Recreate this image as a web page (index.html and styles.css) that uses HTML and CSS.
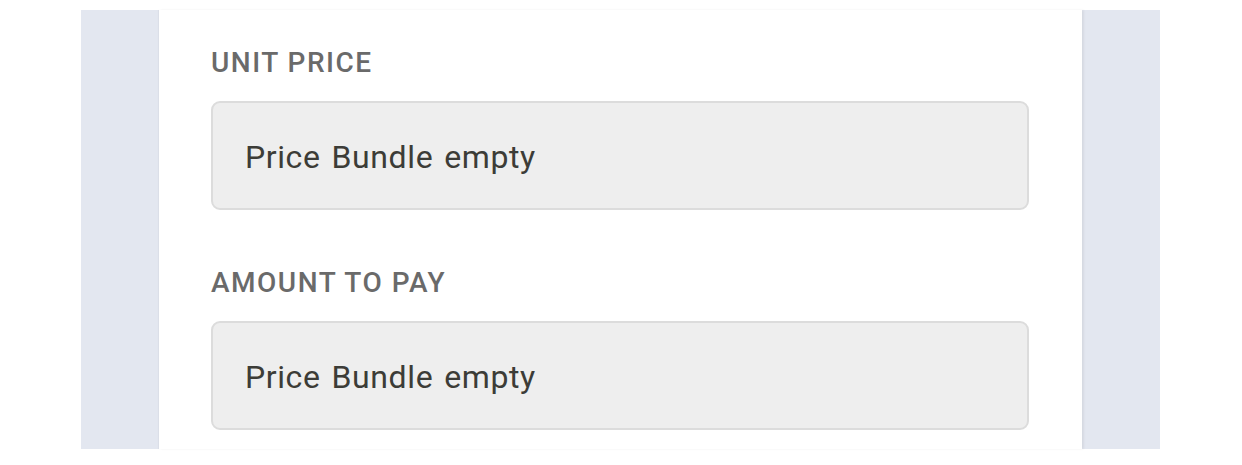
FILE: index.html
```html
<!DOCTYPE html>
<html>
<head>
<meta charset="utf-8">
<link rel="stylesheet" href="styles.css">
</head>
<body>
<div class="panel">
  <div class="card">
    <div class="field">
      <div class="label">UNIT PRICE</div>
      <div class="input">Price Bundle empty</div>
    </div>
    <div class="field second">
      <div class="label">AMOUNT TO PAY</div>
      <div class="input">Price Bundle empty</div>
    </div>
  </div>
</div>
</body>
</html>
```
FILE: styles.css
```css
html, body {
  margin: 0;
  padding: 0;
  background: #ffffff;
  height: 465px;
  overflow: hidden;
}
body {
  font-family: Roboto, "Liberation Sans", sans-serif;
}
.panel {
  margin: 10px 0 0 81px;
  width: 1079px;
  height: 439px;
  background: #e3e7f0;
  padding: 0 78px;
  box-sizing: border-box;
  display: flex;
}
.card {
  flex: 1;
  background: #ffffff;
  padding: 39px 53px 0 52px;
  box-shadow: 2px 0 2px rgba(0,0,0,0.06), -1px 0 1px rgba(0,0,0,0.03);
}
.field {
  display: flex;
  flex-direction: column;
}
.field.second {
  margin-top: 59px;
}
.label {
  font-size: 28px;
  line-height: 28px;
  height: 28px;
  font-weight: 500;
  letter-spacing: 1.5px;
  color: #6a6a6a;
}
.input {
  margin-top: 24px;
  height: 109px;
  box-sizing: border-box;
  border: 2px solid #dcdcdc;
  border-radius: 9px;
  background: #eeeeee;
  padding: 38px 0 0 32px;
  font-size: 32px;
  line-height: 32px;
  letter-spacing: 0.6px;
  word-spacing: 2.5px;
  color: #3c3c37;
}
```
